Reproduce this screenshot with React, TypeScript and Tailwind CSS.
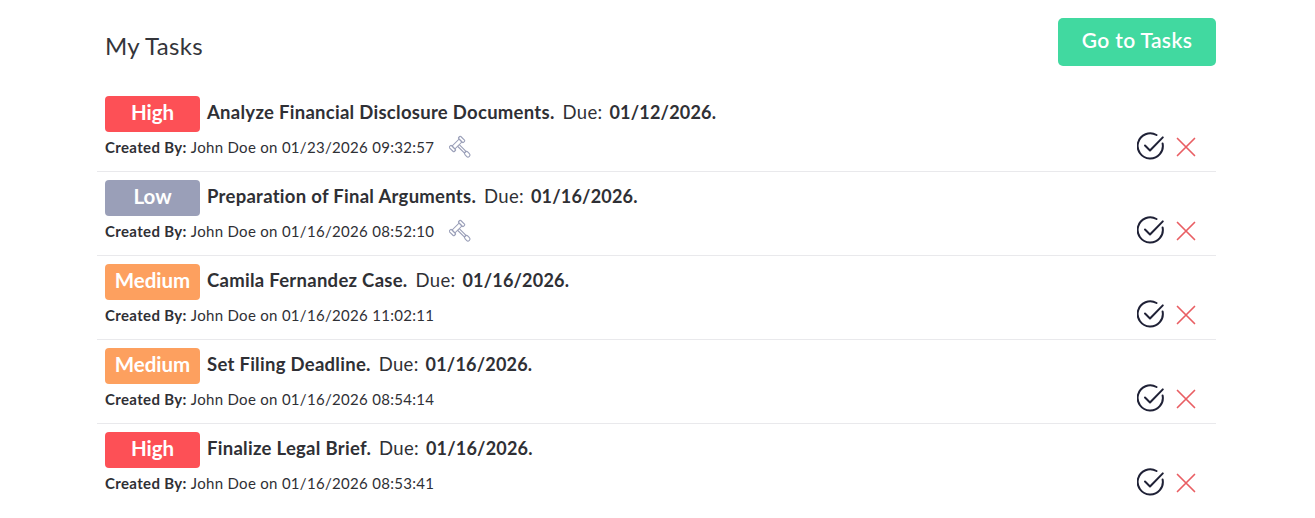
const tasks = [
  { priority: 'High', title: 'Analyze Financial Disclosure Documents.', due: '01/12/2026.', created: '01/23/2026 09:32:57', gavel: true },
  { priority: 'Low', title: 'Preparation of Final Arguments.', due: '01/16/2026.', created: '01/16/2026 08:52:10', gavel: true },
  { priority: 'Medium', title: 'Camila Fernandez Case.', due: '01/16/2026.', created: '01/16/2026 11:02:11', gavel: false },
  { priority: 'Medium', title: 'Set Filing Deadline.', due: '01/16/2026.', created: '01/16/2026 08:54:14', gavel: false },
  { priority: 'High', title: 'Finalize Legal Brief.', due: '01/16/2026.', created: '01/16/2026 08:53:41', gavel: false },
];

const badgeColors: Record<string, string> = {
  High: 'bg-[#fd5056]',
  Low: 'bg-[#9a9fb8]',
  Medium: 'bg-[#fda05f]',
};

function GavelIcon() {
  return (
    <svg width="24" height="24" viewBox="0 0 24 24" fill="none" stroke="#9a9fb8" strokeWidth="1.1" strokeLinejoin="round" className="ml-[15px]">
      <g transform="translate(8 9) rotate(45)">
        <path d="M-2-5H2V5H-2Z" />
        <rect x="-3.4" y="-8" width="6.8" height="3" rx="0.8" />
        <rect x="-3.4" y="5" width="6.8" height="3" rx="0.8" />
        <path d="M2-1.2H11.5V1.2H2" />
        <rect x="11.5" y="-2" width="6" height="4" rx="2" />
      </g>
    </svg>
  );
}

function CheckIcon() {
  return (
    <svg width="28" height="28" viewBox="0 0 28 28" fill="none" stroke="#1f2136" strokeWidth="2" strokeLinecap="round" strokeLinejoin="round" className="-mt-[2px]">
      <path d="M25.6 11.5 A12.6 12.6 0 1 1 19.5 3" />
      <path d="M8 13.5 L13 18.5 L25.8 5.4" />
    </svg>
  );
}

function CrossIcon() {
  return (
    <svg width="22" height="22" viewBox="0 0 22 22" fill="none" stroke="#e95e63" strokeWidth="1.7" strokeLinecap="round">
      <path d="M2.5 2.5 L19.5 19.5 M19.5 2.5 L2.5 19.5" />
    </svg>
  );
}

export default function App() {
  return (
    <div className="w-[1315px] h-[518px] bg-white overflow-hidden font-['Lato',sans-serif] text-[#2f3035]">
      <div className="ml-[97px] w-[1119px]">
        <div className="h-[88px] pt-[18px] flex justify-between items-start">
          <h2 className="ml-2 mt-[13px] text-[24px] leading-[30px] tracking-[0.3px] text-[#34353a]">My Tasks</h2>
          <button className="w-[158px] h-[48px] pb-[4px] rounded-[5px] bg-[#41d9a0] text-white text-[21px] font-semibold tracking-[0.35px]">
            Go to Tasks
          </button>
        </div>
        {tasks.map((task, i) => (
          <div key={i} className={`h-[84px] pl-2 pt-2 ${i < tasks.length - 1 ? 'border-b border-[#e9e9ec]' : ''}`}>
            <div className="flex items-center h-[36px]">
              <span className={`w-[95px] h-[36px] pb-[4px] rounded-[4px] flex items-center justify-center text-white text-[20.5px] font-bold ${badgeColors[task.priority]}`}>
                {task.priority}
              </span>
              <span className="ml-[7px] pb-[3px] text-[18.5px] font-bold tracking-[0.28px]">{task.title}</span>
              <span className="ml-2 pb-[3px] text-[18.5px] tracking-[0.3px]">Due:</span>
              <span className="ml-[7px] pb-[3px] text-[18px] font-bold tracking-[0.2px]">{task.due}</span>
            </div>
            <div className="flex items-center h-[30px] pr-[19px]">
              <span className="text-[15px] font-bold tracking-[0.35px]">Created By:</span>
              <span className="ml-1 text-[15px] tracking-[0.3px]">John Doe on {task.created}</span>
              {task.gavel && <GavelIcon />}
              <div className="ml-auto flex items-center gap-[10px]">
                <CheckIcon />
                <CrossIcon />
              </div>
            </div>
          </div>
        ))}
      </div>
    </div>
  );
}
